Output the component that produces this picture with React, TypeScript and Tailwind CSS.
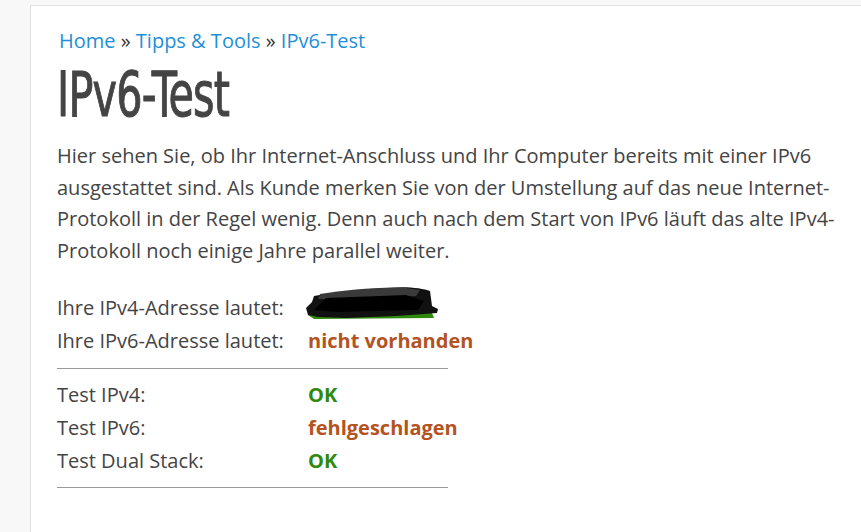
const rows = [
  { label: "Test IPv4:", value: "OK", tone: "ok" },
  { label: "Test IPv6:", value: "fehlgeschlagen", tone: "fail" },
  { label: "Test Dual Stack:", value: "OK", tone: "ok" },
]

function Redacted() {
  return (
    <svg width="134" height="38" viewBox="0 0 134 38" className="-mt-[8px] -ml-[2px] shrink-0">
      <path d="M2 31 L10 28 L126 29 L128 34 L8 35 Z" fill="#2d8a0a" />
      <path
        d="M8 12 C30 8 60 5 80 4 C100 2 116 4 124 7 L126 22 L132 25 L131 29 L118 30 L90 32 L40 34 L12 33 L2 31 L0 24 L6 18 Z"
        fill="#111"
      />
      <path d="M14 10 C40 6 70 3 100 4 L114 6 L110 12 L40 15 L12 15 Z" fill="#3a3a3a" />
      <path d="M20 14 L100 11 L118 17 L112 26 L30 28 L8 26 Z" fill="#000" />
    </svg>
  )
}

export default function App() {
  return (
    <div className="w-[861px] h-[532px] overflow-hidden bg-[#f8f8f8] pt-[5px] pl-[30px] font-['Open_Sans','Liberation_Sans',sans-serif]">
      <div className="h-full bg-white border-l border-t border-[#e2e2e2] pl-[26px] pt-[21px]">
        <div className="text-[20px] leading-[28px] text-[#1f8fd8] pl-[2px]">
          Home <span className="text-[#333]">»</span> Tipps &amp; Tools{" "}
          <span className="text-[#333]">»</span> IPv6-Test
        </div>
        <h1 className="mt-[5px] text-[62px] leading-[70px] text-[#444] font-['Liberation_Sans_Narrow','DejaVu_Sans_Condensed',sans-serif] tracking-[-1px] origin-left scale-x-[0.74] [-webkit-text-stroke:1px_#444]">
          IPv6-Test
        </h1>
        <p className="mt-[10px] w-[790px] text-[20px] leading-[31.7px] text-[#444]">
          Hier sehen Sie, ob Ihr Internet-Anschluss und Ihr Computer bereits mit einer IPv6
          ausgestattet sind. Als Kunde merken Sie von der Umstellung auf das neue Internet-
          Protokoll in der Regel wenig. Denn auch nach dem Start von IPv6 läuft das alte IPv4-
          Protokoll noch einige Jahre parallel weiter.
        </p>

        <div className="mt-[25px] w-[391px] text-[20px] leading-[32.7px] text-[#444] whitespace-nowrap">
          <div className="flex">
            <span className="w-[251px] shrink-0">Ihre IPv4-Adresse lautet:</span>
            <Redacted />
          </div>
          <div className="flex">
            <span className="w-[251px] shrink-0">Ihre IPv6-Adresse lautet:</span>
            <span className="font-bold text-[#b4531f]">nicht vorhanden</span>
          </div>
          <div className="mt-[11px] mb-[10px] border-t border-[#999]" />
          {rows.map((row, index) => (
            <div key={index} className="flex">
              <span className="w-[251px] shrink-0">{row.label}</span>
              <span
                className={
                  row.tone === "ok"
                    ? "font-bold text-[#2d8a0a]"
                    : "font-bold text-[#b4531f]"
                }
              >
                {row.value}
              </span>
            </div>
          ))}
          <div className="mt-[10px] border-t border-[#999]" />
        </div>
      </div>
    </div>
  )
}
